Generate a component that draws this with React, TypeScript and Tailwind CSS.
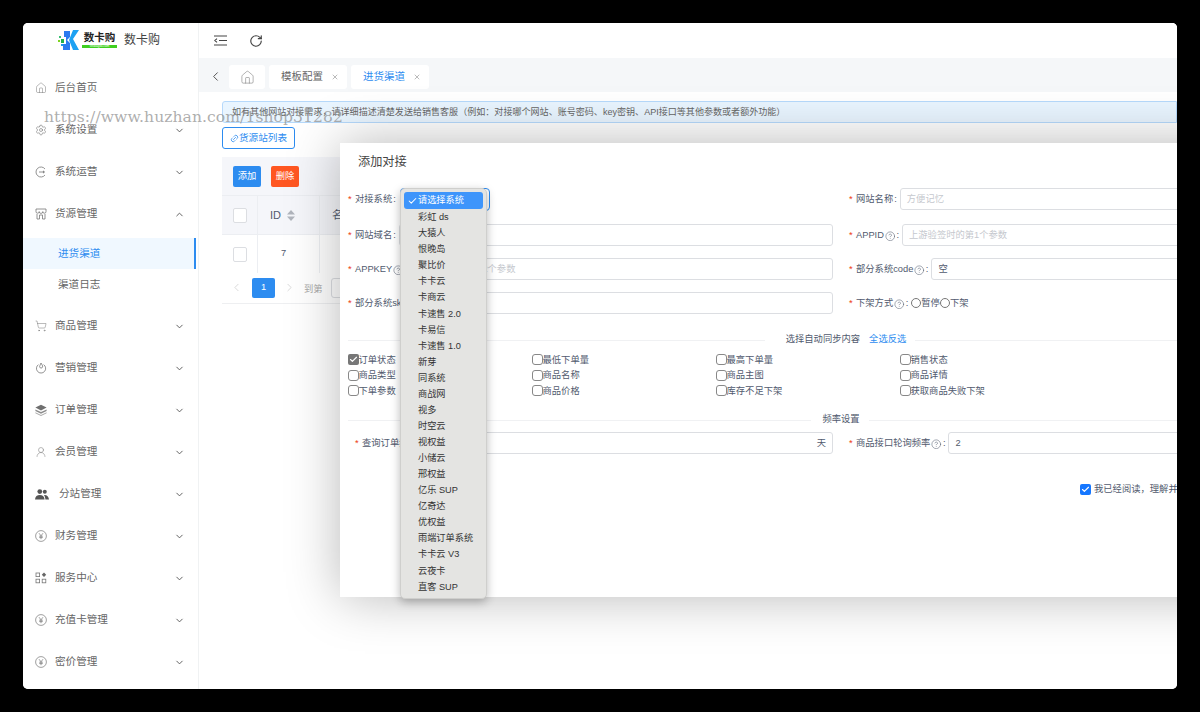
import React from 'react'
import {
  ChevronDown,
  ChevronLeft,
  ChevronRight,
  ChevronUp,
  CircleHelp,
  House,
  Link2,
  RotateCw,
  Settings,
  ShoppingCart,
  UserRound,
  X,
  Check,
} from 'lucide-react'

const cjk = "font-['Liberation_Sans','Noto_Sans_CJK_SC',sans-serif]"

function YenIcon() {
  return (
    <svg width="12" height="12" viewBox="0 0 12 12" fill="none" stroke="#777" strokeWidth="0.7">
      <circle cx="6" cy="6" r="5.4" />
      <path d="M4 3.2 6 5.8 8 3.2M6 5.8V9.2M4.2 6.2H7.8M4.2 7.6H7.8" />
    </svg>
  )
}

function OpsIcon() {
  return (
    <svg width="12" height="12" viewBox="0 0 12 12" fill="none" stroke="#777" strokeWidth="0.8">
      <path d="M10 3A5 5 0 1 0 10 9" />
      <path d="M4 6H7" />
      <circle cx="8.5" cy="6" r="0.8" fill="#777" />
    </svg>
  )
}

function StockIcon() {
  return (
    <svg width="12" height="12" viewBox="0 0 12 12" fill="none" stroke="#777" strokeWidth="0.8">
      <path d="M1 1H11V3.6A1.6 1.6 0 0 1 7.8 3.6 1.8 1.8 0 0 1 4.2 3.6 1.6 1.6 0 0 1 1 3.6Z" />
      <path d="M2 6V11H4.5V7H7.5V11H10V6" />
    </svg>
  )
}

function FireIcon() {
  return (
    <svg width="12" height="12" viewBox="0 0 12 12" fill="none" stroke="#777" strokeWidth="0.8">
      <path d="M3.5 2.6A4.6 4.6 0 1 0 8.6 2.6" />
      <path d="M6 1C6.6 2.6 8 3.4 7.6 5 7.2 6.4 5 6.4 4.6 5 4.4 4.2 5.4 2.8 6 1Z" />
    </svg>
  )
}

function LayersIcon() {
  return (
    <svg width="12" height="12" viewBox="0 0 12 12" fill="#6f6f6f">
      <path d="M6 .8 11.6 3.6 6 6.4 .4 3.6Z" />
      <path d="M.4 5.4 6 8.1 11.6 5.4V7L6 9.7.4 7Z" opacity=".8" />
      <path d="M.4 8.2 6 10.9 11.6 8.2V9.2L6 11.9.4 9.2Z" opacity=".6" />
    </svg>
  )
}

function TeamIcon() {
  return (
    <svg width="14" height="11" viewBox="0 0 14 11" fill="#555">
      <circle cx="4.8" cy="2.6" r="2.4" />
      <circle cx="9.8" cy="2.8" r="2" />
      <path d="M0 10.5C.2 7.4 2.2 6 4.8 6S9.4 7.4 9.6 10.5ZM10.4 10.5C10.3 8.6 9.8 7 8.8 6 11.6 5.6 13.8 7.4 14 10.5Z" />
    </svg>
  )
}

function ServiceIcon() {
  return (
    <svg width="12" height="12" viewBox="0 0 12 12" fill="none" stroke="#777" strokeWidth="0.8">
      <rect x="1" y="1" width="3.6" height="3.6" />
      <rect x="1" y="7.2" width="3.6" height="3.6" />
      <rect x="7.2" y="7.2" width="3.6" height="3.6" />
      <path d="M9 .6 11.2 2.8 9 5 6.8 2.8Z" fill="#666" stroke="none" />
    </svg>
  )
}

const menus: { label: string; icon: React.ReactNode; wide?: boolean }[] = [
  { label: '系统设置', icon: <Settings size={12} strokeWidth={1.2} color="#777" /> },
  { label: '系统运营', icon: <OpsIcon /> },
  { label: '货源管理', icon: <StockIcon /> },
  { label: '商品管理', icon: <ShoppingCart size={12} strokeWidth={1} color="#777" /> },
  { label: '营销管理', icon: <FireIcon /> },
  { label: '订单管理', icon: <LayersIcon /> },
  { label: '会员管理', icon: <UserRound size={12} strokeWidth={1} color="#777" /> },
  { label: '分站管理', icon: <TeamIcon />, wide: true },
  { label: '财务管理', icon: <YenIcon /> },
  { label: '服务中心', icon: <ServiceIcon /> },
  { label: '充值卡管理', icon: <YenIcon /> },
  { label: '密价管理', icon: <YenIcon /> },
]

const systems = [
  '彩虹 ds', '大猿人', '恨晚岛', '聚比价', '卡卡云', '卡商云', '卡速售 2.0', '卡易信', '卡速售 1.0', '新芽', '同系统', '商战网',
  '视多', '时空云', '视权益', '小储云', '邢权益', '亿乐 SUP', '亿奇达', '优权益', '雨端订单系统', '卡卡云 V3', '云夜卡', '直客 SUP',
]

const syncOptions = [
  '订单状态', '最低下单量', '最高下单量', '销售状态',
  '商品类型', '商品名称', '商品主图', '商品详情',
  '下单参数', '商品价格', '库存不足下架', '获取商品失败下架',
]

function MenuRow({ label, icon, wide, open, leaf }: { label: string; icon: React.ReactNode; wide?: boolean; open?: boolean; leaf?: boolean }) {
  return (
    <div className="flex h-[42px] shrink-0 items-center pl-3 pr-[13px] text-[10.6px] text-[#666]">
      <span className={wide ? 'flex w-6 shrink-0' : 'flex w-5 shrink-0'}>{icon}</span>
      <span className="flex-1">{label}</span>
      {!leaf && (open ? <ChevronUp size={11} color="#555" /> : <ChevronDown size={11} color="#555" />)}
    </div>
  )
}

function Sidebar() {
  const before = menus.slice(0, 3)
  const after = menus.slice(3)
  return (
    <aside className="flex w-[176px] shrink-0 flex-col border-r border-[#f0f2f3] bg-white">
      <div className="flex h-[43px] shrink-0 items-start pl-[35px] pt-[7px]">
        <svg width="22" height="20" viewBox="0 0 22 20" className="shrink-0">
          <rect x="1" y="6" width="2" height="2" fill="#38c172" />
          <rect x="0" y="10" width="2" height="2" fill="#7ed321" />
          <rect x="3" y="9" width="3" height="4" fill="#22b14c" />
          <rect x="3" y="14" width="2" height="2" fill="#1e9be8" />
          <path d="M6 1H12V7L9 10 12 13V20H5V14H8V7H6Z" fill="#2b7bf0" />
          <path d="M15 0H21L15 9 21 20H15L11 10Z" fill="#1da1f2" />
        </svg>
        <div className="ml-[2px] flex w-[35px] flex-col items-center">
          <span className="text-[10.5px] leading-[13px] font-bold whitespace-nowrap text-[#222] font-['Noto_Sans_CJK_SC',serif]">数卡购</span>
          <span className="mt-[2px] block h-[3px] w-[35px] overflow-hidden bg-[#3fcf1f] text-center text-[3px] leading-[3px] text-white">shukagou.com</span>
        </div>
        <span className={`ml-[7px] mt-[1px] text-[12px] leading-[18px] text-[#444] ${cjk}`}>数卡购</span>
      </div>
      <div className="mt-px">
        <MenuRow label="后台首页" icon={<House size={12} strokeWidth={1} color="#777" />} leaf />
        {before.map((m) => (
          <MenuRow key={m.label} {...m} open={m.label === '货源管理'} />
        ))}
      </div>
      <div className="mb-[5px] mt-[3px] flex flex-col text-[10.6px]">
        <div className="mr-[2px] flex h-[31px] items-center border-r-[2px] border-[#2d8cf0] bg-[#f0f8ff] pl-[35px] text-[#2d8cf0]">进货渠道</div>
        <div className="flex h-[31px] items-center pl-[35px] text-[#666]">渠道日志</div>
      </div>
      {after.map((m) => (
        <MenuRow key={m.label} {...m} />
      ))}
    </aside>
  )
}

function Tab({ label, active }: { label: string; active?: boolean }) {
  return (
    <div className={`flex h-6 w-[78px] items-center rounded-[3px] bg-white pl-3 text-[10.5px] ${active ? 'text-[#2d8cf0]' : 'text-[#666]'}`}>
      <span>{label}</span>
      <X size={8} className="ml-2" color="#999" />
    </div>
  )
}

function SortCaret() {
  return (
    <svg width="8" height="11" viewBox="0 0 8 11" fill="#b0b4bc" className="ml-[6px]">
      <path d="M4 0 8 4.4H0Z" />
      <path d="M4 11 0 6.6H8Z" />
    </svg>
  )
}

function Box() {
  return <span className="block h-[15px] w-[14px] rounded-[2px] border border-[#dcdee2] bg-white" />
}

function Main() {
  return (
    <main className={`flex min-w-0 flex-1 flex-col bg-white ${cjk}`}>
      <div className="flex h-[35px] shrink-0 items-center bg-white pl-[15px]">
        <svg width="13" height="11" viewBox="0 0 13 11" fill="none" stroke="#444" strokeWidth="1.1">
          <path d="M0 1H13M5 5.5H13M0 10H13M3 3.6 .8 5.5 3 7.4" />
        </svg>
        <RotateCw size={14} color="#444" className="ml-[22px]" />
      </div>
      <div className="flex h-[34px] shrink-0 items-start gap-1 bg-[#f5f7f9] pl-[9px] pt-[7px]">
        <ChevronLeft size={15} strokeWidth={1.6} color="#555" className="mr-[2px] mt-[4px]" />
        <div className="flex h-6 w-9 items-center justify-center rounded-[3px] bg-white">
          <House size={15} strokeWidth={0.9} color="#777" />
        </div>
        <Tab label="模板配置" />
        <Tab label="进货渠道" active />
      </div>
      <div className="flex flex-col pl-[23px] pt-[9px]">
        <div className="flex h-[22px] items-center rounded-l-[3px] border border-[#b6d9fb] bg-[#e9f5ff] pl-[9px] pt-px text-[9.05px] whitespace-nowrap text-[#666]">
          如有其他网站对接需求，请详细描述清楚发送给销售客服（例如：对接哪个网站、账号密码、key密钥、API接口等其他参数或者额外功能）
        </div>
        <div className="mt-1 flex h-[22px] w-[73px] items-center justify-center rounded-[3px] border border-[#2d8cf0] pt-px text-[9.6px] text-[#2d8cf0]">
          <Link2 size={9} className="-rotate-45" />
          货源站列表
        </div>
        <div className="mt-2 flex h-[38px] items-center gap-[10px] bg-[#f5f6fa] pl-[11px] text-[9.3px] text-white">
          <span className="flex h-[21px] w-[28px] items-center justify-center rounded-[2px] bg-[#2d8cf0] pt-[2px]">添加</span>
          <span className="flex h-[21px] w-[28px] items-center justify-center rounded-[2px] bg-[#ff5722] pt-[2px]">删除</span>
        </div>
        <div className="flex h-10 border-y border-[#eceef2] bg-[#f5f6fa] text-[11px] text-[#515a6e]">
          <div className="flex w-9 items-center justify-center border-r border-[#eceef2]"><Box /></div>
          <div className="flex w-[62px] items-center border-r border-[#eceef2] pl-3">ID<SortCaret /></div>
          <div className="flex items-center pl-3">名称</div>
        </div>
        <div className="flex h-[38px] text-[9.3px] text-[#515a6e]">
          <div className="flex w-9 items-center justify-center border-r border-[#eceef2]"><Box /></div>
          <div className="flex w-[62px] items-center border-r border-[#eceef2] pl-[23px]">7</div>
        </div>
        <div className="mt-[5px] flex h-[26px] items-start border-b border-[#eeeff1] pl-[8px] text-[9.3px] text-[#aaa]">
          <ChevronLeft size={13} strokeWidth={1} color="#bbb" className="mt-[3px]" />
          <span className="ml-[9px] flex h-5 w-[23px] items-center justify-center rounded-[2px] bg-[#2d8cf0] text-white">1</span>
          <ChevronRight size={13} strokeWidth={1} color="#bbb" className="ml-2 mt-[3px]" />
          <span className="ml-[8px] mt-[5px]">到第</span>
          <span className="ml-2 block h-5 w-10 rounded-[3px] border border-[#dcdee2]" />
        </div>
      </div>
    </main>
  )
}

function FieldLabel({ text, help }: { text: string; help?: boolean }) {
  return (
    <span className="flex shrink-0 translate-y-px items-center whitespace-nowrap text-[9.3px] text-[#515a6e]">
      <span className="mr-[2px] w-[5px] text-[#ed4014]">*</span>
      {text}
      {help && <CircleHelp size={10.5} strokeWidth={1.2} className="ml-[1px]" />}
      <span className="ml-[1px] mr-[3px]">:</span>
    </span>
  )
}

function Field({ text, help, placeholder, value, suffix, className }: {
  text: string
  help?: boolean
  placeholder?: string
  value?: string
  suffix?: string
  className?: string
}) {
  return (
    <div className={`flex h-[22px] items-center ${className ?? ''}`}>
      <FieldLabel text={text} help={help} />
      <div className="flex h-full min-w-0 flex-1 items-center rounded-[3px] border border-[#dcdee2] bg-white px-[6px] pt-px text-[9.3px] whitespace-nowrap text-[#515a6e]">
        <span className={`flex-1 ${placeholder ? 'text-[#c5c8ce]' : ''}`}>{placeholder ?? value}</span>
        {suffix && <span className="text-[#515a6e]">{suffix}</span>}
      </div>
    </div>
  )
}

function SectionTitle({ children, inner }: { children: React.ReactNode; inner: string }) {
  return (
    <div className="flex h-3 items-center gap-[9px] text-[9.3px] text-[#515a6e]">
      <span className="h-px flex-1 bg-[#f0f1f3]" />
      <span className={`flex gap-[9px] whitespace-nowrap ${inner}`}>{children}</span>
      <span className="h-px flex-1 bg-[#f0f1f3]" />
    </div>
  )
}

function SystemDropdown() {
  return (
    <div className="absolute left-[60px] top-[45px] z-20 flex h-[411px] w-[87px] flex-col rounded-[5px] border border-[#cfcfcd] bg-[#e4e4e2] px-[3px] pt-[3px] text-[9.2px] text-[#333] shadow-[0_3px_10px_rgba(0,0,0,0.28)]">
      <div className="flex h-[17px] shrink-0 items-center rounded-[3px] bg-[#3e95fb] pl-[3px] text-white">
        <Check size={10} strokeWidth={2.5} className="w-[11px] shrink-0" />
        请选择系统
      </div>
      <div className="flex flex-col pt-px">
        {systems.map((s) => (
          <div key={s} className="flex h-[16.07px] shrink-0 items-center whitespace-nowrap pl-[14px]">{s}</div>
        ))}
      </div>
    </div>
  )
}

function AddModal() {
  return (
    <div className={`absolute left-[317px] top-[120px] z-10 h-[454px] w-[1000px] bg-white px-2 shadow-[0_0_50px_rgba(0,0,0,0.28)] ${cjk}`}>
      <div className="flex h-[39px] items-center pl-[10px] text-[12.2px] text-[#444]">添加对接</div>
      <div className="mt-[6px] grid grid-cols-[485px_485px] gap-x-4">
        <div className="flex flex-col gap-y-3">
          <div className="flex h-[22px] items-center">
            <FieldLabel text="对接系统" />
            <span className="ml-[1px] block h-[23px] w-[90px] rounded-[4px] border border-[#2d8cf0] bg-white" />
          </div>
          <Field text="网站域名" className="mt-[2px]" />
          <Field text="APPKEY" help placeholder="上游验签时的第2个参数" />
          <Field text="部分系统skey" help />
        </div>
        <div className="flex flex-col gap-y-3">
          <Field text="网站名称" placeholder="方便记忆" />
          <Field text="APPID" help placeholder="上游验签时的第1个参数" className="mt-[2px]" />
          <Field text="部分系统code" help value="空" />
          <div className="flex h-[22px] items-center">
            <FieldLabel text="下架方式" help />
            <span className="block h-[10px] w-[10px] rounded-full border border-[#777]" />
            <span className="translate-y-px text-[9.3px] text-[#515a6e]">暂停</span>
            <span className="block h-[10px] w-[10px] rounded-full border border-[#777]" />
            <span className="translate-y-px text-[9.3px] text-[#515a6e]">下架</span>
          </div>
        </div>
      </div>
      <div className="mt-5">
        <SectionTitle inner="ml-3">
          <span>选择自动同步内容</span>
          <span className="text-[#2d8cf0]">全选反选</span>
        </SectionTitle>
      </div>
      <div className="mt-[7px] grid grid-cols-[184px_184px_184px_184px] text-[9.3px] text-[#515a6e]">
        {syncOptions.map((o, i) => (
          <div key={o} className="flex h-[15.4px] items-center whitespace-nowrap">
            {i === 0 ? (
              <span className="flex h-[11px] w-[10.5px] shrink-0 -translate-y-px items-center justify-center rounded-[2px] bg-[#777]">
                <Check size={9} strokeWidth={3} color="#fff" />
              </span>
            ) : (
              <span className="block h-[11px] w-[10.5px] shrink-0 -translate-y-px rounded-[3px] border border-[#888] bg-white" />
            )}
            {o}
          </div>
        ))}
      </div>
      <div className="mt-[15px]">
        <SectionTitle inner="ml-[2px]">
          <span>频率设置</span>
        </SectionTitle>
      </div>
      <div className="mt-[6px] grid grid-cols-[485px_485px] gap-x-4">
        <Field text="查询订单频率" help value="" suffix="天" className="pl-[7px]" />
        <Field text="商品接口轮询频率" help value="2" />
      </div>
      <div className="mt-[30px] flex h-[11px] items-center pl-[732px] text-[9.3px] whitespace-nowrap text-[#515a6e]">
        <span className="mr-[3px] flex h-[11px] w-[11px] items-center justify-center rounded-[2px] bg-[#1677ff]">
          <Check size={9} strokeWidth={3} color="#fff" />
        </span>
        我已经阅读，理解并同意相关协议
      </div>
      <SystemDropdown />
    </div>
  )
}

export default function App() {
  return (
    <div className="h-[712px] w-[1200px] overflow-hidden bg-black p-[23px]">
      <div className={`relative flex h-full overflow-hidden rounded-[5px] bg-white ${cjk}`}>
        <Sidebar />
        <Main />
        <AddModal />
        <div className="absolute left-[21px] top-[84px] z-30 text-[15.6px] leading-5 tracking-[0.05px] whitespace-nowrap text-[#8a8a8a]/70 font-['DejaVu_Serif',serif]">
          https://www.huzhan.com/1shop31282
        </div>
      </div>
    </div>
  )
}
